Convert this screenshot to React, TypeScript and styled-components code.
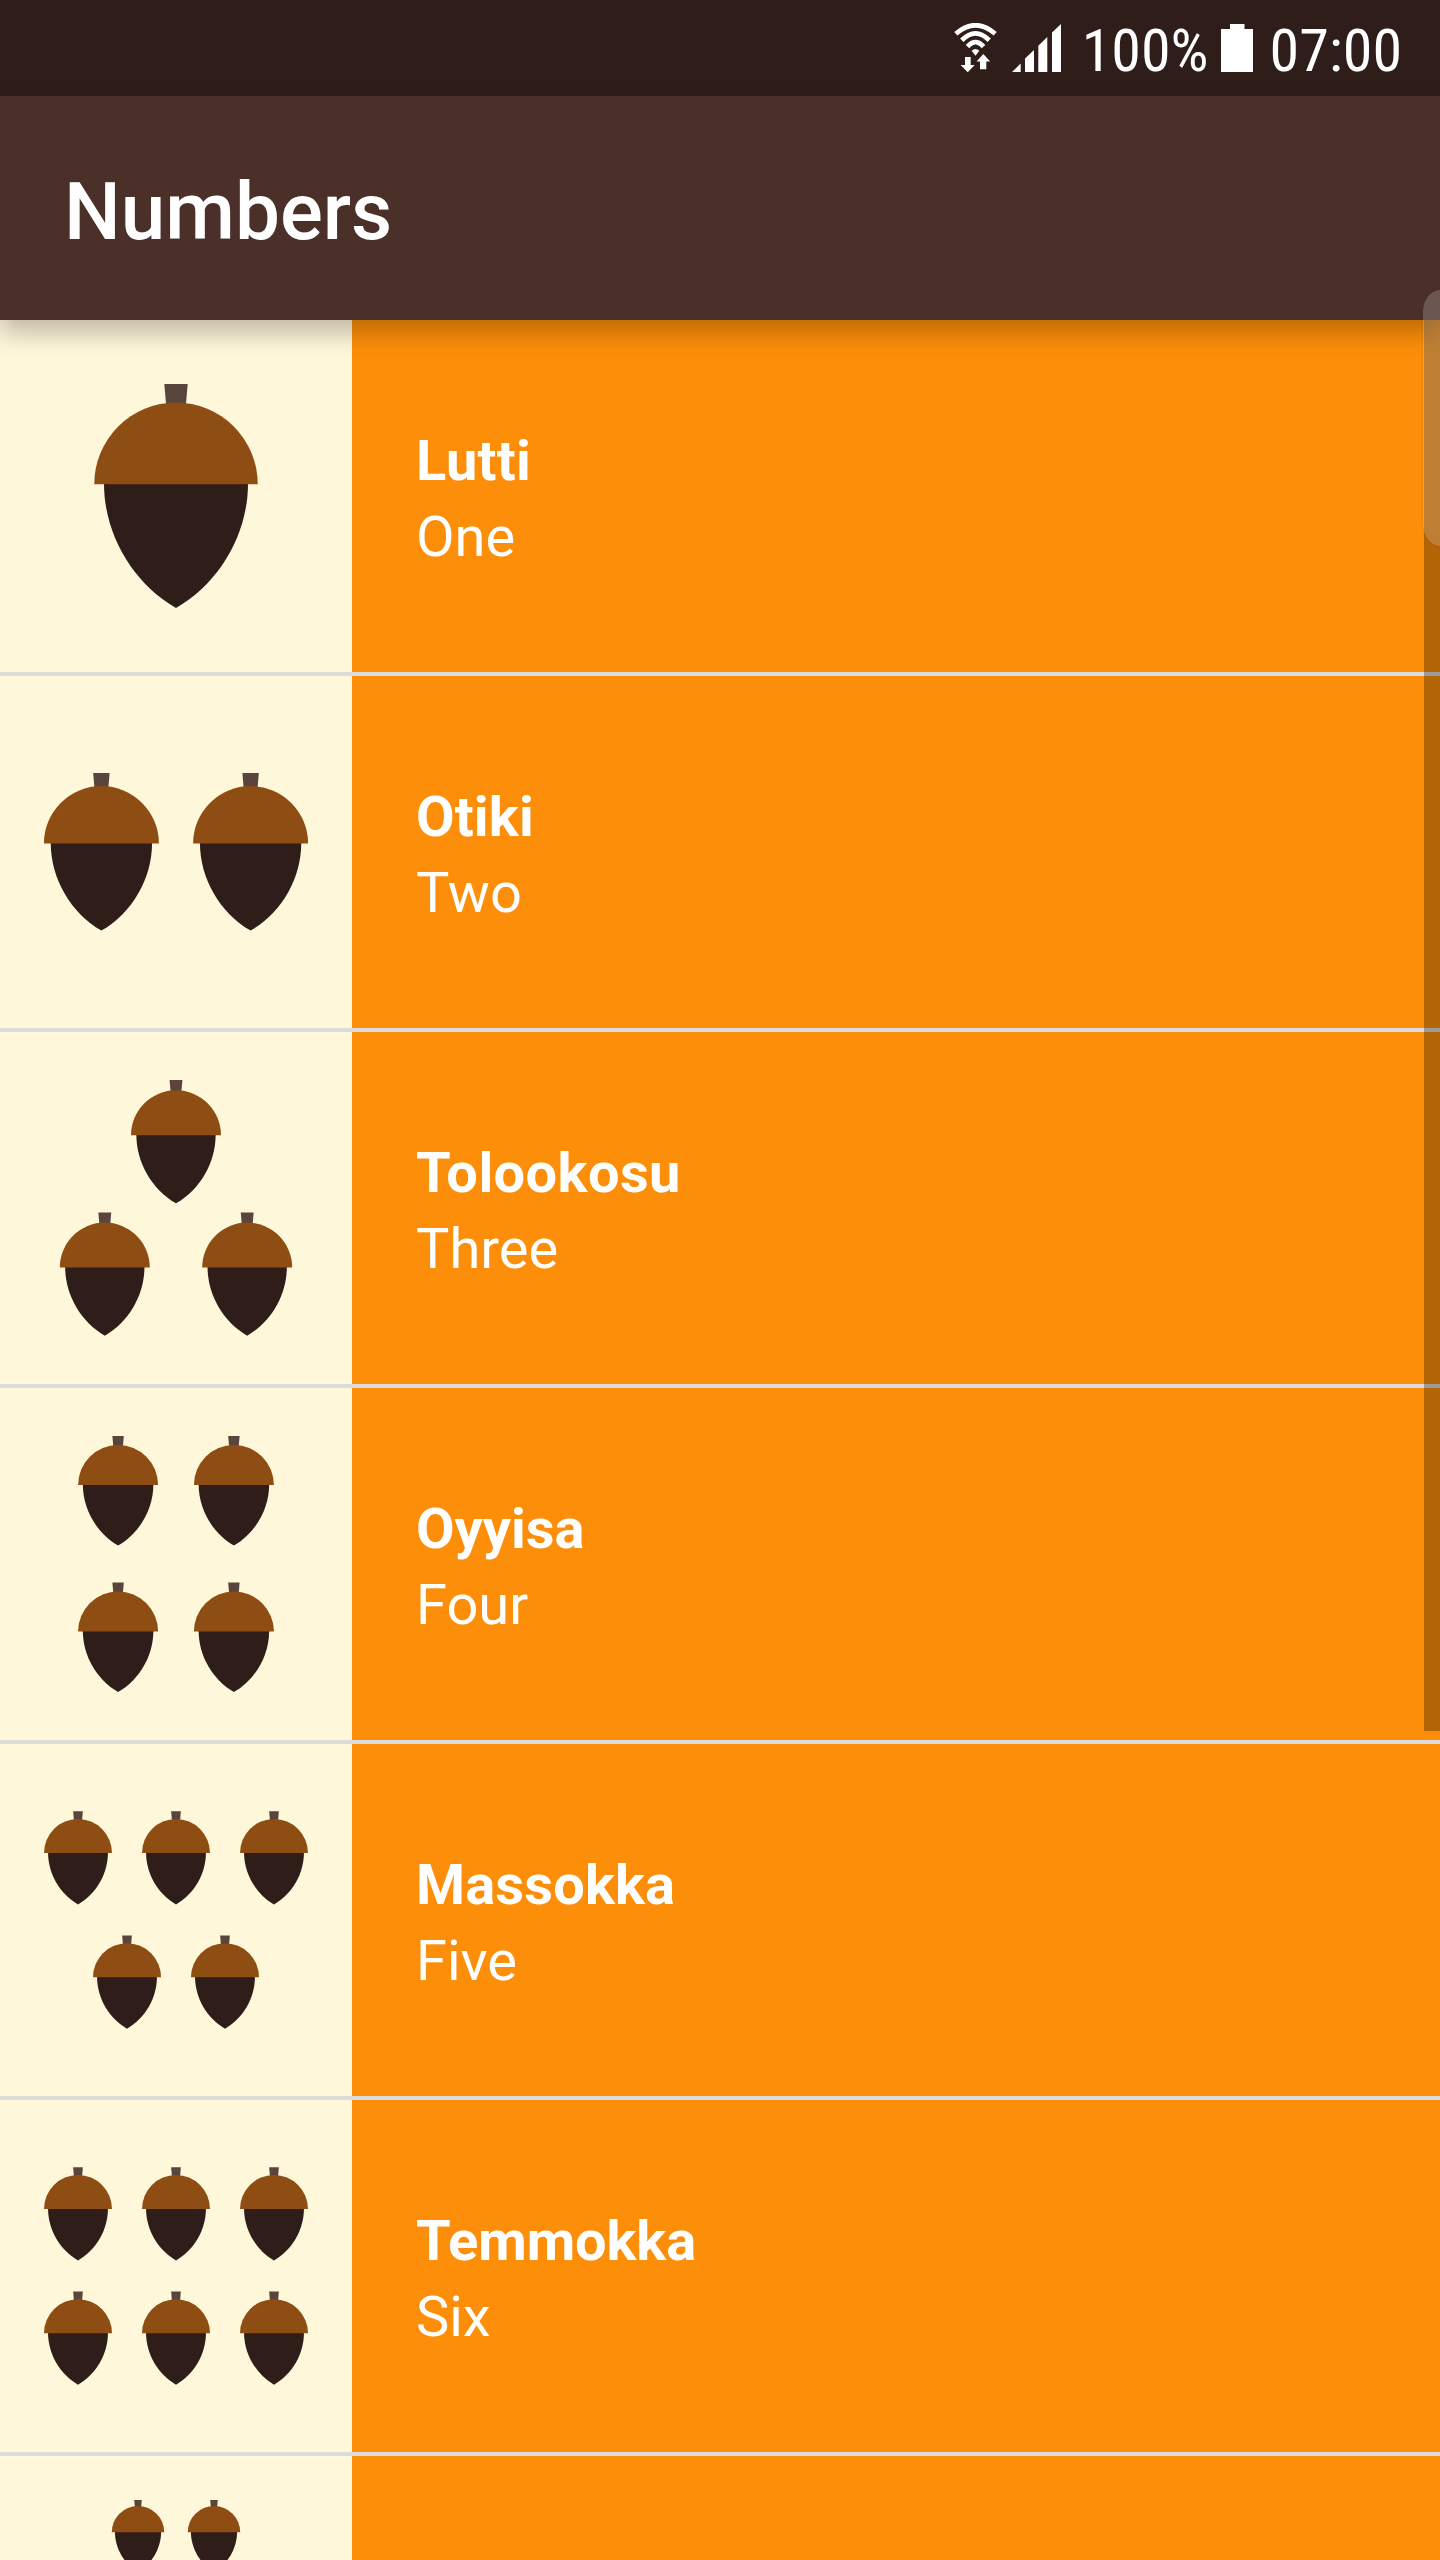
import React from "react";
import styled, { createGlobalStyle } from "styled-components";

const GlobalStyle = createGlobalStyle`
  * { box-sizing: border-box; }
  body { margin: 0; background: #fd8e09; }
`;

const Screen = styled.div`
  position: relative;
  width: 1440px;
  height: 2560px;
  overflow: hidden;
  display: flex;
  flex-direction: column;
  font-family: Roboto, "Noto Sans", sans-serif;
  color: #fff;
`;

const StatusBar = styled.header`
  flex: none;
  display: flex;
  align-items: center;
  justify-content: flex-end;
  height: 96px;
  padding: 0 38px 0 0;
  background: #2f1d1a;
`;

const StatusIcon = styled.svg<{ $gap: number }>`
  display: block;
  flex: none;
  margin-right: ${(p) => p.$gap}px;
`;

const StatusText = styled.span<{ $gap?: number }>`
  margin-right: ${(p) => p.$gap ?? 0}px;
  font-family: "Roboto Condensed", Roboto, sans-serif;
  font-stretch: 75%;
  font-size: 60px;
  line-height: 70px;
  padding-top: 5px;
`;

const AppBar = styled.div`
  flex: none;
  position: relative;
  z-index: 1;
  display: flex;
  align-items: center;
  height: 224px;
  padding: 7px 64px 0;
  background: #4b302a;
  box-shadow: 0 12px 24px rgba(0, 0, 0, 0.26);
`;

const Title = styled.h1`
  margin: 0;
  font-size: 80px;
  line-height: 94px;
  font-weight: 500;
`;

const WordList = styled.ul`
  flex: 1;
  min-height: 0;
  margin: 0;
  padding: 0;
  list-style: none;
  overflow: hidden;
`;

const WordRow = styled.li`
  display: flex;
  height: 356px;
  border-bottom: 4px solid #dcdcdc;
  background: #fd8e09;
`;

const Tile = styled.svg`
  display: block;
  flex: none;
  width: 352px;
  height: 352px;
  background: #fff7da;
`;

const Words = styled.div`
  display: flex;
  flex-direction: column;
  justify-content: center;
  padding: 6px 0 0 64px;
  font-size: 56px;
  line-height: 76px;
`;

const Miwok = styled.span<{ $tracking?: number }>`
  font-weight: 700;
  letter-spacing: ${(p) => p.$tracking ?? 0.15}px;
`;

const English = styled.span`
  font-weight: 400;
`;

const ScrollTrack = styled.div`
  position: absolute;
  z-index: 2;
  top: 320px;
  right: 0;
  width: 16px;
  height: 1411px;
  background: rgba(0, 0, 0, 0.29);
`;

const ScrollThumb = styled.div`
  position: absolute;
  z-index: 3;
  top: 290px;
  right: 0;
  width: 17px;
  height: 256px;
  border-radius: 17px 0 0 17px / 22px 0 0 22px;
  background: rgba(232, 232, 232, 0.21);
  box-shadow: 0 0 3px rgba(0, 0, 0, 0.12);
`;

type Spot = [center: number, top: number];

interface Word {
  miwok?: string;
  english?: string;
  tracking?: number;
  width: number;
  spots: Spot[];
}

const words: Word[] = [
  { miwok: "Lutti", english: "One", tracking: 0.3, width: 163.5, spots: [[176, 64]] },
  { miwok: "Otiki", english: "Two", width: 115, spots: [[101.4, 97], [250.6, 97]] },
  { miwok: "Tolookosu", english: "Three", tracking: 0.4, width: 90, spots: [[176, 48], [104.8, 180.4], [247.2, 180.4]] },
  { miwok: "Oyyisa", english: "Four", tracking: 0, width: 80, spots: [[118.1, 48], [233.9, 48], [118.1, 194.4], [233.9, 194.4]] },
  { miwok: "Massokka", english: "Five", width: 68, spots: [[78, 67.3], [176, 67.3], [274, 67.3], [127, 191.5], [225, 191.5]] },
  { miwok: "Temmokka", english: "Six", tracking: -0.1, width: 68, spots: [[78, 67.3], [176, 67.3], [274, 67.3], [78, 191.5], [176, 191.5], [274, 191.5]] },
  { width: 52.5, spots: [[138, 44], [214, 44]] },
];

function Acorn({ center, top, width }: { center: number; top: number; width: number }) {
  const scale = width / 163.5;
  return (
    <g transform={`translate(${center} ${top}) scale(${scale})`}>
      <path d="M-11.7 0H11.7L9.8 22H-9.8Z" fill="#5a453e" />
      <path d="M-72 98V99.7C-72 149.3 -44 198.7 0 224C44 198.7 72 149.3 72 99.7V98Z" fill="#2f1d1a" />
      <path d="M-81.75 100.3A81.75 81.75 0 0 1 81.75 100.3Z" fill="#8e4d12" />
    </g>
  );
}

function WifiIcon() {
  return (
    <StatusIcon $gap={14} width="44" height="50" viewBox="0 0 44 50">
      <g fill="none" stroke="#fff" strokeWidth="4.8">
        <path d="M1.8 10.8Q21.5 -6.2 41.2 10.8" />
        <path d="M7.8 17.2Q21.5 3.4 35.2 17.2" />
        <path d="M13.5 23.7Q21.5 14.6 29.5 23.7" />
      </g>
      <path d="M17.7 27.8Q21.5 24.4 25.3 27.8L21.5 32.7Z" fill="#fff" />
      <path d="M11 34H16.7V42H20.7L13.7 49.3L6.7 42H11Z" fill="#fff" />
      <path d="M26 46.3H32.3V38.5H36.2L29.3 31L22.6 38.5H26Z" fill="#fff" />
    </StatusIcon>
  );
}

function SignalIcon() {
  return (
    <StatusIcon $gap={21} width="49" height="48" viewBox="0 0 49 48">
      <path d="M0 48L8.7 39.5V48ZM13 48V34.5L22 26V48ZM26.3 48V21.7L35.3 13V48ZM40 48V8.5L49 0V48Z" fill="#fff" />
    </StatusIcon>
  );
}

function BatteryIcon() {
  return (
    <StatusIcon $gap={17} width="32" height="48" viewBox="0 0 32 48">
      <path d="M9 0H23.5V5H32V48H0V5H9Z" fill="#fff" />
    </StatusIcon>
  );
}

export default function App() {
  return (
    <Screen>
      <GlobalStyle />
      <StatusBar>
        <WifiIcon />
        <SignalIcon />
        <StatusText $gap={12}>100%</StatusText>
        <BatteryIcon />
        <StatusText>07:00</StatusText>
      </StatusBar>
      <AppBar>
        <Title>Numbers</Title>
      </AppBar>
      <WordList>
        {words.map((word, index) => (
          <WordRow key={index}>
            <Tile viewBox="0 0 352 352">
              {word.spots.map(([center, top]) => (
                <Acorn key={`${center}-${top}`} center={center} top={top} width={word.width} />
              ))}
            </Tile>
            {word.miwok && (
              <Words>
                <Miwok $tracking={word.tracking}>{word.miwok}</Miwok>
                <English>{word.english}</English>
              </Words>
            )}
          </WordRow>
        ))}
      </WordList>
      <ScrollTrack />
      <ScrollThumb />
    </Screen>
  );
}
